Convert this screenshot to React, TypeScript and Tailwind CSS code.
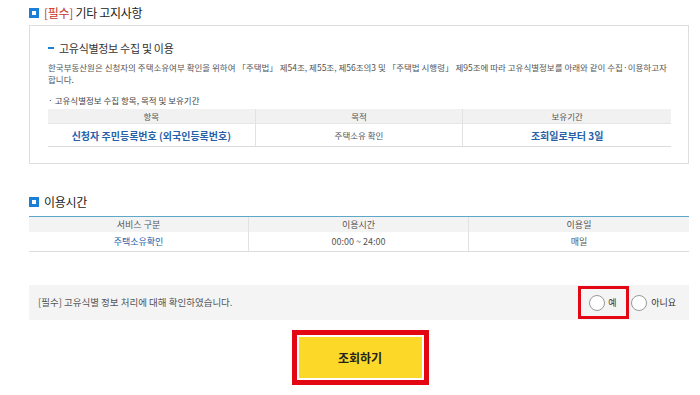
import React from 'react';

const FONT = { fontFamily: '"Noto Sans CJK KR", "Noto Sans", sans-serif' };

function SectionTitle({ children }: { children: React.ReactNode }) {
  return (
    <div className="flex items-center gap-[5px] h-[20px]">
      <span className="w-[10px] h-[10px] border-[3px] border-[#1a7fd6] bg-white box-border"></span>
      <h2 className="text-[12px] tracking-[-0.3px] text-[#222] leading-none">{children}</h2>
    </div>
  );
}

export default function App() {
  return (
    <div className="w-[700px] h-[395px] bg-white overflow-hidden" style={FONT}>
      <div className="ml-[29px] w-[660px] pt-[3px]">
        {/* 기타 고지사항 */}
        <SectionTitle>
          <span className="text-[#c8332b]">[필수]</span> 기타 고지사항
        </SectionTitle>

        <div className="mt-[2px] border border-[#dedede] h-[139px] pl-[18px] pr-[17px] pt-[14px]">
          <h3 className="flex items-center text-[11px] tracking-[-0.3px] text-[#333] leading-[16px]">
            <span className="w-[6px] h-[2px] bg-[#1a7fd6] mr-[5px]"></span>
            고유식별정보 수집 및 이용
          </h3>
          <p className="mt-[5px] text-[8.5px] leading-[12px] text-[#555]">
            한국부동산원은 신청자의 주택소유여부 확인을 위하여 「주택법」 제54조, 제55조, 제56조의3 및 「주택법 시행령」 제95조에 따라 고유식별정보를 아래와 같이 수집·이용하고자 합니다.
          </p>
          <p className="mt-[9px] text-[8.5px] leading-[12px] text-[#444]">· 고유식별정보 수집 항목, 목적 및 보유기간</p>
          <div className="mt-[3px] grid grid-cols-3 text-[8.5px] text-[#555] border-b border-[#dcdcdc]">
            <div className="h-[14px] bg-[#f1f1f1] flex items-center justify-center border-r border-[#e2e2e2]">항목</div>
            <div className="h-[14px] bg-[#f1f1f1] flex items-center justify-center border-r border-[#e2e2e2]">목적</div>
            <div className="h-[14px] bg-[#f1f1f1] flex items-center justify-center">보유기간</div>
            <div className="h-[23px] flex items-center justify-center border-r border-[#e2e2e2] border-t border-t-[#e6e6e6] text-[10px] font-bold text-[#2561a8]">
              신청자 주민등록번호 (외국인등록번호)
            </div>
            <div className="h-[23px] flex items-center justify-center border-r border-[#e2e2e2] border-t border-t-[#e6e6e6]">주택소유 확인</div>
            <div className="h-[23px] flex items-center justify-center border-t border-t-[#e6e6e6] text-[10px] font-bold text-[#2561a8]">
              조회일로부터 3일
            </div>
          </div>
        </div>

        {/* 이용시간 */}
        <div className="mt-[28px]">
          <SectionTitle>이용시간</SectionTitle>
        </div>
        <div className="mt-[4px] grid grid-cols-3 text-[9px] text-[#555] border-t border-t-[#5da8c8] border-b border-[#dcdcdc]">
          <div className="h-[15px] bg-[#f3f3f3] flex items-center justify-center border-r border-[#e2e2e2]">서비스 구분</div>
          <div className="h-[15px] bg-[#f3f3f3] flex items-center justify-center border-r border-[#e2e2e2]">이용시간</div>
          <div className="h-[15px] bg-[#f3f3f3] flex items-center justify-center">이용일</div>
          <div className="h-[19px] flex items-center justify-center border-r border-[#e2e2e2] text-[#2561a8]">주택소유확인</div>
          <div className="h-[19px] flex items-center justify-center border-r border-[#e2e2e2]">00:00 ~ 24:00</div>
          <div className="h-[19px] flex items-center justify-center">매일</div>
        </div>

        {/* 확인 */}
        <div className="mt-[33px] h-[35px] bg-[#f4f4f4] flex items-center pl-[9px] pr-[13px]">
          <p className="flex-1 text-[9.5px] text-[#555]">[필수] 고유식별 정보 처리에 대해 확인하였습니다.</p>
          <label className="h-[33px] w-[51px] border-[3px] border-[#e30613] flex items-center pl-[8px] gap-[3px] text-[9px] text-[#333]">
            <span className="w-[16px] h-[16px] rounded-full border border-[#999] bg-white"></span>
            예
          </label>
          <label className="ml-[2px] flex items-center gap-[4px] text-[9px] text-[#333]">
            <span className="w-[16px] h-[16px] rounded-full border border-[#999] bg-white"></span>
            아니요
          </label>
        </div>

        <div className="flex justify-center mt-[10px] pl-[2px]">
          <div className="border-[5px] border-[#e30613] p-[2px] bg-white">
            <button className="w-[123px] h-[41px] bg-[#fcd928] text-[12px] font-bold text-[#222]">조회하기</button>
          </div>
        </div>
      </div>
    </div>
  );
}
